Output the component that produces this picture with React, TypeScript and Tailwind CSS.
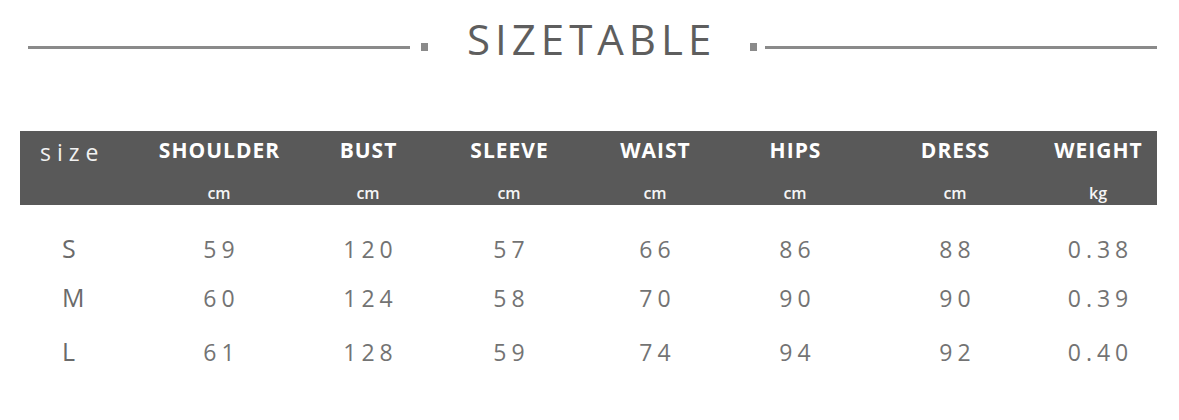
import React from "react";

const cols = ["SHOULDER", "BUST", "SLEEVE", "WAIST", "HIPS", "DRESS", "WEIGHT"];
const units = ["cm", "cm", "cm", "cm", "cm", "cm", "kg"];
const rows: { size: string; vals: string[]; h: string }[] = [
  { size: "S", vals: ["59", "120", "57", "66", "86", "88", "0.38"], h: "h-[50px]" },
  { size: "M", vals: ["60", "124", "58", "70", "90", "90", "0.39"], h: "h-[48px]" },
  { size: "L", vals: ["61", "128", "59", "74", "94", "92", "0.40"], h: "h-[60px]" },
];

const grid = "grid grid-cols-[125px_148px_150px_132px_160px_120px_200px_86px_1fr]";

export default function App() {
  return (
    <div className="w-[1179px] h-[420px] bg-white overflow-hidden" style={{ fontFamily: '"Open Sans", "Liberation Sans", sans-serif' }}>
      {/* title */}
      <div className="flex items-start pt-[18px] h-[131px]">
        <div className="ml-[28px] mt-[28px] w-[382px] h-[3px] bg-[#8a8a8a]" />
        <div className="ml-[11px] mt-[25px] w-[7px] h-[8px] bg-[#8a8a8a]" />
        <div className="ml-[39px] w-[252px] text-[42px] leading-[42px] tracking-[5px] text-[#5e5e5e] font-medium whitespace-nowrap">SIZETABLE</div>
        <div className="ml-[31px] mt-[25px] w-[7px] h-[8px] bg-[#8a8a8a]" />
        <div className="ml-[8px] mt-[28px] w-[392px] h-[3px] bg-[#8a8a8a]" />
      </div>
      {/* header bar */}
      <div className="mx-[20px] w-[1137px] h-[74px] bg-[#595959] text-white">
        <div className={`${grid} h-[36px] items-center`}>
          <div className="pl-[20px] text-[23px] tracking-[6px] font-normal text-[#f2f2f2] pt-[4px]">size</div>
          {cols.map((c) => (
            <div key={c} className="flex justify-center text-[21px] font-bold tracking-[1px] whitespace-nowrap">
              <span className="mr-[-1px]">{c}</span>
            </div>
          ))}
          <div />
        </div>
        <div className={`${grid} h-[38px] items-center pt-[14px]`}>
          <div />
          {units.map((u, i) => (
            <div key={i} className="flex justify-center text-[16px] font-semibold text-[#f5f5f5]">
              {u}
            </div>
          ))}
          <div />
        </div>
      </div>
      {/* data rows */}
      <div className="mx-[20px] w-[1137px] pt-[19px]">
        {rows.map((r) => (
          <div key={r.size} className={`${grid} ${r.h} items-center text-[#737373]`}>
            <div className="pl-[42px] text-[25px] font-normal text-[#6a6a6a]">{r.size}</div>
            {r.vals.map((v, i) => (
              <div key={i} className="flex justify-center text-[23px] font-normal tracking-[5px] whitespace-nowrap">
                <span className="mr-[-5px]">{v}</span>
              </div>
            ))}
            <div />
          </div>
        ))}
      </div>
    </div>
  );
}
